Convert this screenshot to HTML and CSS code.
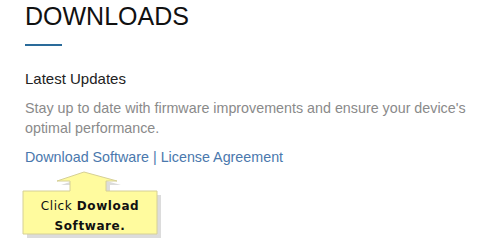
FILE: index.html
```html
<!DOCTYPE html>
<html lang="en">
<head>
    <meta charset="UTF-8">
    <title>Downloads</title>
    <link rel="stylesheet" href="styles.css">
</head>
<body>
    <div class="page">
        <h1 class="title">DOWNLOADS</h1>
        <div class="rule"></div>

        <h2 class="subtitle">Latest Updates</h2>
        <p class="intro">Stay up to date with firmware improvements and ensure your device's optimal performance.</p>

        <p class="links">
            <a href="#">Download Software</a> | <a href="#">License Agreement</a>
        </p>
    </div>

    <!-- callout pointing at the link -->
    <div class="callout">
        <svg class="callout-shape" width="150" height="75" viewBox="0 0 150 75">
            <polygon class="shadow" points="68,6 101,15 90,15 90,25 141,25 141,68 7,68 7,25 54,25 54,15 41,15"/>
            <polygon class="body" points="64,2 97,11 86,11 86,21 137,21 137,64 3,64 3,21 50,21 50,11 37,11"/>
        </svg>
        <div class="callout-text">Click <b>Dowload</b><br><b>Software.</b></div>
    </div>
</body>
</html>
```

FILE: styles.css
```css
body {
    margin: 0;
    background: #fff;
    font-family: "Liberation Sans", Arial, sans-serif;
}
.page {
    padding: 2px 0 0 25px;
}
.title {
    margin: 0;
    font-size: 25px;
    font-weight: normal;
    color: #111;
    line-height: 29px;
}
.rule {
    width: 37px;
    height: 2px;
    margin-top: 13px;
    background: #2a6b9a;
}
.subtitle {
    margin: 24px 0 0;
    font-size: 15px;
    font-weight: normal;
    color: #222;
    line-height: 17px;
}
.intro {
    margin: 11px 0 0;
    font-size: 14.3px;
    line-height: 20px;
    color: #8a8a8a;
    max-width: 450px;
}
.links {
    margin: 9px 0 0;
    font-size: 14.3px;
    line-height: 20px;
    color: #4a78ad;
}
.links a {
    color: #4a78ad;
    text-decoration: none;
}
.callout {
    position: absolute;
    left: 20px;
    top: 170px;
    width: 150px;
    height: 75px;
}
.callout-shape {
    display: block;
}
.callout-shape .shadow {
    fill: #dcdcdc;
}
.callout-shape .body {
    fill: #fffb9e;
    stroke: #d6d096;
    stroke-width: 1;
}
.callout-text {
    position: absolute;
    left: 3px;
    top: 26px;
    width: 134px;
    text-align: center;
    font-family: "DejaVu Sans", Verdana, sans-serif;
    font-size: 12px;
    line-height: 20px;
    letter-spacing: 0.6px;
    color: #111;
}
```
